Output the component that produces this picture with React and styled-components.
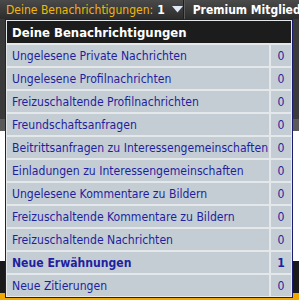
import { Fragment } from "react";
import styled, { createGlobalStyle } from "styled-components";

const GlobalStyle = createGlobalStyle`
  html, body {
    margin: 0;
    padding: 0;
    width: 299px;
    height: 300px;
    overflow: hidden;
    background: #2a2a2a;
  }
  * {
    box-sizing: border-box;
  }
`;

const Page = styled.div`
  position: relative;
  width: 299px;
  height: 300px;
  display: flex;
  flex-direction: column;
  overflow: hidden;
  font-family: "DejaVu Sans Condensed", "DejaVu Sans", Verdana, sans-serif;
  font-stretch: condensed;
`;

const TopBar = styled.div`
  height: 19px;
  display: flex;
  align-items: center;
  padding-left: 6px;
  background: linear-gradient(#4a4a4a, #2c2c2c);
  font-size: 12px;
  white-space: nowrap;
`;

const NotifyLink = styled.div`
  display: flex;
  align-items: center;
  gap: 4px;
  color: #f2b705;
  width: 192px;
  border-right: 1px solid #1e1e1e;
  height: 19px;
`;

const Count = styled.b`
  color: #fff;
`;

const Arrow = styled.svg`
  width: 11px;
  height: 7px;
  margin-left: 3px;
`;

const Premium = styled.div`
  color: #fff;
  font-weight: bold;
  padding-left: 8px;
  border-left: 1px solid #5a5a5a;
  height: 19px;
  display: flex;
  align-items: center;
`;

const Band = styled.div`
  flex: none;
  height: ${({ h }) => h}px;
  background: ${({ bg }) => bg};
`;

const Popup = styled.div`
  position: absolute;
  left: 5px;
  top: 19px;
  width: 288px;
  border: 1px solid #1c1c6e;
  background: #e4e8eb;
  padding: 1px;
  display: grid;
  grid-template-columns: 1fr 20px;
  gap: 2px;
`;

const Header = styled.div`
  grid-column: 1 / 3;
  height: 22px;
  background: #1c1c1c;
  color: #fff;
  font-weight: bold;
  font-size: 13px;
  display: flex;
  align-items: center;
  padding-left: 5px;
`;

const Cell = styled.div`
  height: 21px;
  background: #c4cdd4;
  color: #1f1fa0;
  font-size: 12.1px;
  font-weight: ${({ strong }) => (strong ? "bold" : "normal")};
  display: flex;
  align-items: center;
  justify-content: ${({ num }) => (num ? "center" : "flex-start")};
  padding: 1px 0 0 ${({ num }) => (num ? 0 : 5)}px;
  white-space: nowrap;
  overflow: hidden;
`;

const items = [
  ["Ungelesene Private Nachrichten", 0],
  ["Ungelesene Profilnachrichten", 0],
  ["Freizuschaltende Profilnachrichten", 0],
  ["Freundschaftsanfragen", 0],
  ["Beitrittsanfragen zu Interessengemeinschaften", 0],
  ["Einladungen zu Interessengemeinschaften", 0],
  ["Ungelesene Kommentare zu Bildern", 0],
  ["Freizuschaltende Kommentare zu Bildern", 0],
  ["Freizuschaltende Nachrichten", 0],
  ["Neue Erwähnungen", 1],
  ["Neue Zitierungen", 0],
];

export default function App() {
  return (
    <Page>
      <GlobalStyle />
      <TopBar>
        <NotifyLink>
          Deine Benachrichtigungen: <Count>1</Count>
          <Arrow viewBox="0 0 11 7">
            <path d="M0 0 L11 0 L5.5 6.5 Z" fill="#dfe9f5" />
          </Arrow>
        </NotifyLink>
        <Premium>Premium Mitglied</Premium>
      </TopBar>
      <Band h={100} bg="#3a3a3a" />
      <Band h={12} bg="#5a5a5a" />
      <Band h={130} bg="#ffffff" />
      <Band h={32} bg="#1a1a1a" />
      <Band h={7} bg="#f0a800" />

      <Popup>
        <Header>Deine Benachrichtigungen</Header>
        {items.map(([label, n]) => (
          <Fragment key={label}>
            <Cell strong={n > 0}>{label}</Cell>
            <Cell num strong={n > 0}>
              {n}
            </Cell>
          </Fragment>
        ))}
      </Popup>
    </Page>
  );
}
